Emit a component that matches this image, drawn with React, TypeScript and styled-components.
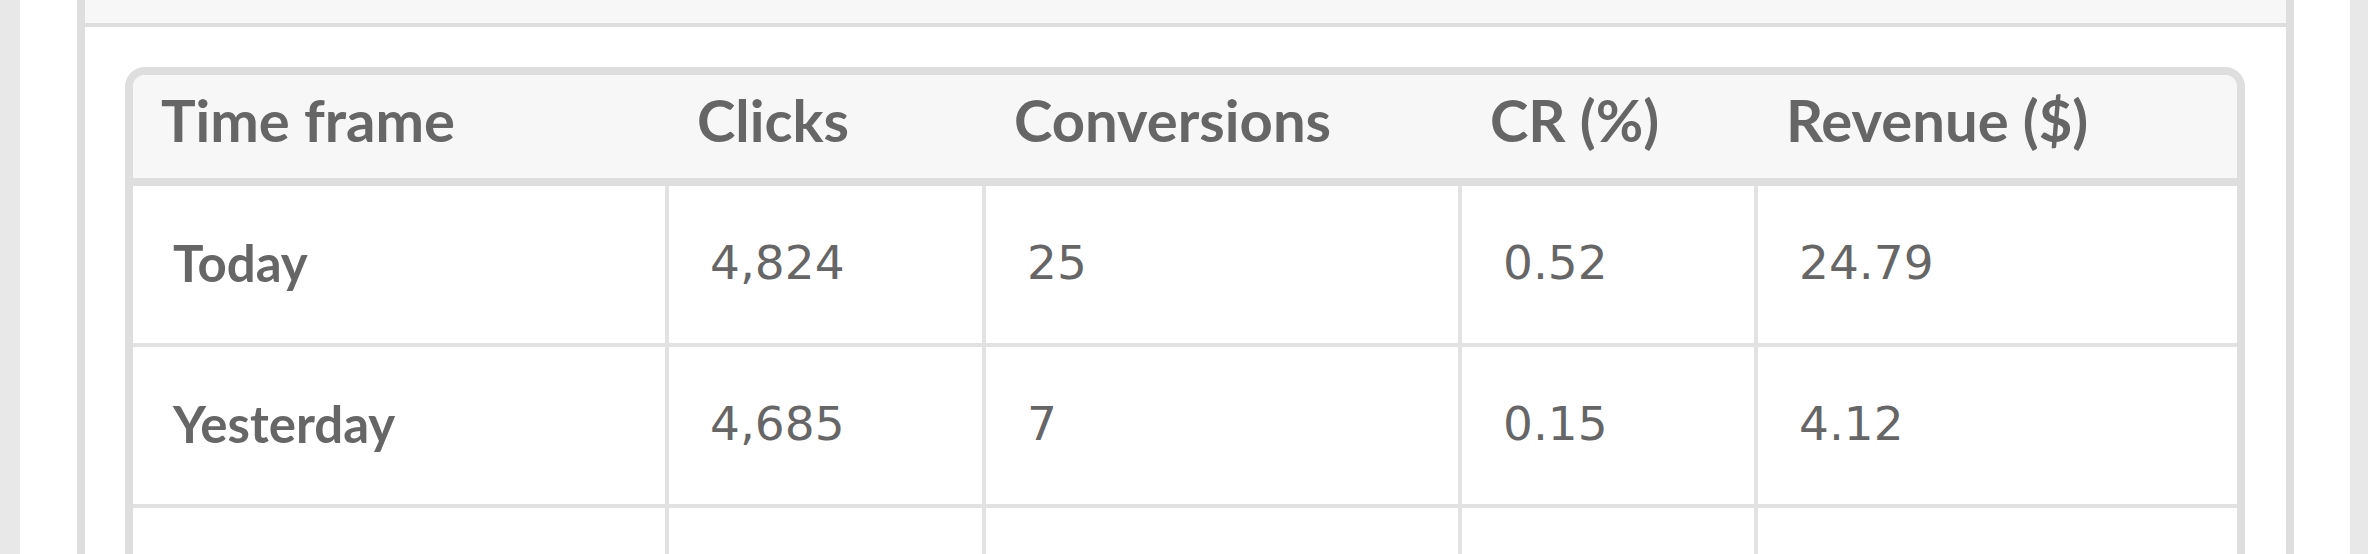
import React from "react";
import styled, { createGlobalStyle } from "styled-components";

const Global = createGlobalStyle`
  html, body { margin: 0; padding: 0; }
  body {
    background: #e8e8e8;
    font-family: "DejaVu Sans", sans-serif;
    color: #666;
    overflow: hidden;
  }
`;

const Page = styled.div`
  padding: 0 18px 0 20px;
  min-height: 554px;
  display: flex;
`;

const Sheet = styled.div`
  flex: 1;
  background: #fff;
  padding: 0 56px 0 57px;
  display: flex;
`;

const Panel = styled.section`
  flex: 1;
  border-left: 8px solid #dedede;
  border-right: 8px solid #dedede;
  display: flex;
  flex-direction: column;
`;

const PanelTop = styled.div`
  height: 23px;
  background: #f7f7f7;
  border-bottom: 4px solid #dedede;
`;

const PanelBody = styled.div`
  padding: 40px 41px 0 40px;
`;

const Table = styled.table`
  width: 100%;
  border-collapse: separate;
  border-spacing: 0;
  border: 8px solid #dedede;
  border-radius: 20px;
  table-layout: fixed;
`;

const Th = styled.th<{ $first?: boolean; $last?: boolean }>`
  height: 111px;
  box-sizing: border-box;
  background: #f7f7f7;
  border-bottom: 8px solid #dedede;
  text-align: left;
  vertical-align: middle;
  padding: 0 0 14px ${(p) => (p.$first ? "28px" : "32px")};
  font-family: Lato, "DejaVu Sans", sans-serif;
  font-weight: 700;
  font-size: 58px;
  color: #666;
  white-space: nowrap;
  border-top-left-radius: ${(p) => (p.$first ? "12px" : "0")};
  border-top-right-radius: ${(p) => (p.$last ? "12px" : "0")};
`;

const Td = styled.td<{ $label?: boolean }>`
  height: 161px;
  box-sizing: border-box;
  border-bottom: 4px solid #e2e2e2;
  border-left: ${(p) => (p.$label ? "none" : "4px solid #e2e2e2")};
  padding: 0 0 4px ${(p) => (p.$label ? "40px" : "41px")};
  vertical-align: middle;
  text-align: left;
  font-family: ${(p) => (p.$label ? 'Lato, "DejaVu Sans", sans-serif' : '"DejaVu Sans", sans-serif')};
  font-weight: ${(p) => (p.$label ? 700 : 400)};
  font-size: ${(p) => (p.$label ? "51px" : "47px")};
  color: #666;
  white-space: nowrap;
`;

const Col = styled.col<{ $w: number }>`
  width: ${(p) => p.$w}px;
`;

const headers = ["Time frame", "Clicks", "Conversions", "CR (%)", "Revenue ($)"];
const widths = [532, 317, 476, 296, 483];

const rows: string[][] = [
  ["Today", "4,824", "25", "0.52", "24.79"],
  ["Yesterday", "4,685", "7", "0.15", "4.12"],
  ["", "", "", "", ""],
];

export default function App() {
  return (
    <>
      <Global />
      <Page>
        <Sheet>
          <Panel>
            <PanelTop />
            <PanelBody>
              <Table>
                <colgroup>
                  {widths.map((w, i) => (
                    <Col key={i} $w={w} />
                  ))}
                </colgroup>
                <thead>
                  <tr>
                    {headers.map((h, i) => (
                      <Th key={h} $first={i === 0} $last={i === headers.length - 1}>
                        {h}
                      </Th>
                    ))}
                  </tr>
                </thead>
                <tbody>
                  {rows.map((r, ri) => (
                    <tr key={ri}>
                      {r.map((c, ci) => (
                        <Td key={ci} $label={ci === 0}>
                          {c}
                        </Td>
                      ))}
                    </tr>
                  ))}
                </tbody>
              </Table>
            </PanelBody>
          </Panel>
        </Sheet>
      </Page>
    </>
  );
}
